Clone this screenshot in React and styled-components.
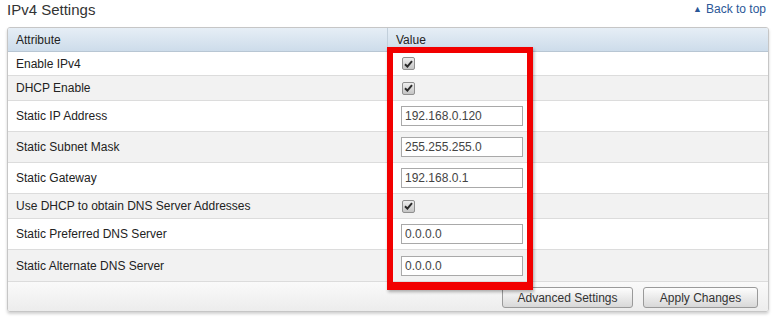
import React from 'react'
import styled, { createGlobalStyle } from 'styled-components'

const GlobalStyle = createGlobalStyle`
  body {
    margin: 0;
    background: #fff;
    font-family: "Liberation Sans", Arial, sans-serif;
    color: #222;
  }
`

const Page = styled.div`
  position: relative;
  width: 779px;
  height: 320px;
  padding: 0 10px 0 7px;
  box-sizing: border-box;
`

const TitleBar = styled.div`
  display: flex;
  justify-content: space-between;
  align-items: flex-start;
  height: 27px;
`

const Title = styled.h2`
  margin: 0;
  padding-top: 1px;
  font-size: 15px;
  font-weight: normal;
  color: #333;
`

const BackLink = styled.a`
  margin-top: 2px;
  margin-right: 3px;
  font-size: 12px;
  color: #2b5797;
  text-decoration: none;
  display: flex;
  align-items: center;
  gap: 4px;

  span {
    font-size: 9px;
    color: #2b5797;
  }
`

const Panel = styled.div`
  border: 1px solid #c6c6c6;
  border-radius: 3px;
  box-shadow: 0 2px 3px rgba(0, 0, 0, 0.18);
  overflow: hidden;
`

const Row = styled.div`
  display: grid;
  grid-template-columns: 379px 1fr;
  height: ${(p) => p.$h}px;
  align-items: center;
  background: ${(p) => (p.$zebra ? '#f2f2f2' : '#fff')};
  border-bottom: 1px solid #dcdcdc;
  box-sizing: border-box;
  font-size: 12px;
  color: #222;
`

const HeadRow = styled(Row)`
  background: linear-gradient(#e6eef6, #cddcea);
  border-bottom: 1px solid #b8c6d3;
`

const Cell = styled.div`
  padding-left: 8px;
  height: 100%;
  display: flex;
  align-items: center;
`

const HeadCell = styled(Cell)`
  border-left: ${(p) => (p.$divide ? '1px solid #c2cfdb' : 'none')};
`

const ValueCell = styled(Cell)`
  padding-left: 15px;
`

const Check = styled.span`
  width: 11px;
  height: 11px;
  border: 1px solid #8f8f8f;
  border-radius: 2px;
  background: linear-gradient(#eeeeee, #c4c4c4);
  display: flex;
  align-items: center;
  justify-content: center;
`

const TextInput = styled.input`
  width: 122px;
  height: 20px;
  box-sizing: border-box;
  border: 1px solid #a9a9a9;
  padding: 0 3px;
  font-family: "Liberation Sans", Arial, sans-serif;
  font-size: 12px;
  color: #444;
  background: #fff;
  margin-left: -1px;
`

const Footer = styled.div`
  height: 29px;
  background: linear-gradient(#fafafa, #ececec);
  display: flex;
  justify-content: flex-end;
  align-items: center;
  gap: 10px;
  padding-right: 10px;
  padding-top: 2px;
  box-sizing: border-box;
`

const Button = styled.button`
  height: 21px;
  width: ${(p) => p.$w}px;
  border: 1px solid #9a9a9a;
  border-radius: 3px;
  background: linear-gradient(#fdfdfd, #d8d8d8);
  font-family: "Liberation Sans", Arial, sans-serif;
  font-size: 12px;
  color: #333;
  padding: 0;
`

const Highlight = styled.div`
  position: absolute;
  left: 387px;
  top: 47px;
  width: 146px;
  height: 243px;
  box-sizing: border-box;
  border: 6px solid #f20000;
  border-bottom-width: 8px;
  box-shadow: 1px 2px 3px rgba(0, 0, 0, 0.3);
  pointer-events: none;
`

const CheckMark = () => (
  <Check>
    <svg width="9" height="8" viewBox="0 0 9 8">
      <path d="M1 4.2 L3.4 6.6 L8 1.2" fill="none" stroke="#2a2a2a" strokeWidth="2" />
    </svg>
  </Check>
)

const rows = [
  { label: 'Enable IPv4', type: 'check', h: 24 },
  { label: 'DHCP Enable', type: 'check', h: 25 },
  { label: 'Static IP Address', value: '192.168.0.120', h: 31 },
  { label: 'Static Subnet Mask', value: '255.255.255.0', h: 31 },
  { label: 'Static Gateway', value: '192.168.0.1', h: 31 },
  { label: 'Use DHCP to obtain DNS Server Addresses', type: 'check', h: 25 },
  { label: 'Static Preferred DNS Server', value: '0.0.0.0', h: 31 },
  { label: 'Static Alternate DNS Server', value: '0.0.0.0', h: 32 },
]

export default function App() {
  return (
    <Page>
      <GlobalStyle />
      <TitleBar>
        <Title>IPv4 Settings</Title>
        <BackLink href="#top">
          <span>▲</span>Back to top
        </BackLink>
      </TitleBar>
      <Panel>
        <HeadRow $h={24}>
          <HeadCell>Attribute</HeadCell>
          <HeadCell $divide>Value</HeadCell>
        </HeadRow>
        {rows.map((r, i) => (
          <Row key={r.label} $h={r.h} $zebra={i % 2 === 1}>
            <Cell>{r.label}</Cell>
            <ValueCell>
              {r.type === 'check' ? <CheckMark /> : <TextInput defaultValue={r.value} />}
            </ValueCell>
          </Row>
        ))}
        <Footer>
          <Button $w={131}>Advanced Settings</Button>
          <Button $w={115}>Apply Changes</Button>
        </Footer>
      </Panel>
      <Highlight />
    </Page>
  )
}
